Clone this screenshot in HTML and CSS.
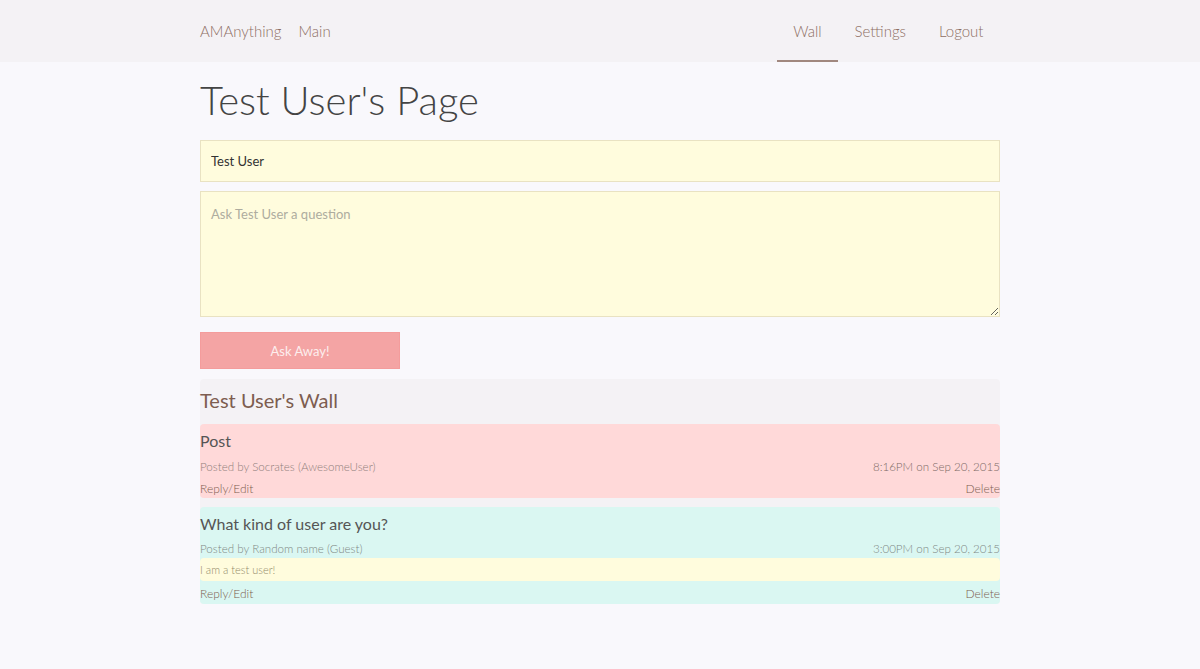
FILE: index.html
```html
<!DOCTYPE html>
<html>
<head>
<meta charset="utf-8">
<link rel="stylesheet" href="styles.css">
</head>
<body>
<nav class="navbar">
  <div class="container nav-inner">
    <div class="nav-left">
      <a class="brand">AMAnything</a>
      <a class="nav-link">Main</a>
    </div>
    <div class="nav-right">
      <a class="nav-link active">Wall</a>
      <a class="nav-link">Settings</a>
      <a class="nav-link">Logout</a>
    </div>
  </div>
</nav>
<main class="container">
  <h1 class="page-title">Test User's Page</h1>
  <input class="field name-field" type="text" value="Test User">
  <textarea class="field question-field" placeholder="Ask Test User a question"></textarea>
  <button class="ask-btn">Ask Away!</button>
  <section class="wall">
    <h2 class="wall-title">Test User's Wall</h2>
    <div class="post post-red">
      <div class="post-title">Post</div>
      <div class="post-meta"><span>Posted by Socrates (AwesomeUser)</span><span>8:16PM on Sep 20, 2015</span></div>
      <div class="post-actions"><a>Reply/Edit</a><a>Delete</a></div>
    </div>
    <div class="post post-teal">
      <div class="post-title">What kind of user are you?</div>
      <div class="post-meta"><span>Posted by Random name (Guest)</span><span>3:00PM on Sep 20, 2015</span></div>
      <div class="reply">I am a test user!</div>
      <div class="post-actions"><a>Reply/Edit</a><a>Delete</a></div>
    </div>
  </section>
</main>
</body>
</html>
```
FILE: styles.css
```css
* { box-sizing: border-box; }
body {
  margin: 0;
  background: #f9f8fc;
  font-family: Lato, "Open Sans", sans-serif;
  color: #444;
}
.container {
  width: 800px;
  margin: 0 auto;
}
.navbar {
  background: #f4f2f5;
  height: 62px;
}
.nav-inner {
  display: flex;
  justify-content: space-between;
  height: 62px;
}
.nav-left, .nav-right {
  display: flex;
  align-items: stretch;
}
.nav-left { gap: 17px; }
.brand, .nav-link {
  display: flex;
  align-items: center;
  color: #8d6e63;
  font-size: 15px;
  font-weight: 300;
  text-decoration: none;
}
.nav-right .nav-link {
  padding: 2px 16.5px 0;
  border-bottom: 2px solid transparent;
}
.nav-right .nav-link.active {
  border-bottom-color: #a1887f;
}
.page-title {
  font-weight: 300;
  font-size: 40px;
  color: #444;
  margin: 13px 0 15px;
  line-height: 50px;
}
.field {
  display: block;
  width: 100%;
  background: #fffcdd;
  border: 1px solid #e9e2c2;
  font-family: Lato, "Open Sans", sans-serif;
  font-size: 13px;
  color: #333;
  padding: 0 10px;
  outline: none;
}
.name-field { height: 42px; }
.question-field {
  height: 126px;
  margin-top: 9px;
  padding: 14px 10px;
  resize: vertical;
}
.question-field::placeholder { color: #aeac9f; }
.ask-btn {
  display: block;
  margin-top: 15px;
  width: 200px;
  height: 37px;
  background: #f4a4a4;
  border: 1px solid #f49c9c;
  color: #fdeeee;
  font-family: Lato, "Open Sans", sans-serif;
  font-size: 13px;
}
.wall {
  margin-top: 10px;
  background: #f4f2f5;
  border-radius: 4px;
  display: flex;
  flex-direction: column;
  gap: 9px;
}
.wall-title {
  margin: 0 0 -9px;
  font-weight: 400;
  font-size: 20px;
  color: #7d5d50;
  height: 45px;
  line-height: 43px;
}
.post {
  border-radius: 4px;
  display: flex;
  flex-direction: column;
}
.post-red { background: #ffd9d9; }
.post-teal { background: #daf7f2; }
.post-title {
  font-size: 16px;
  color: #555;
  line-height: 20px;
  padding-top: 7px;
}
.post-meta, .post-actions {
  display: flex;
  justify-content: space-between;
  font-weight: 300;
  line-height: 16px;
}
.post-meta {
  font-size: 11.6px;
  color: #8f807b;
  margin-top: 8px;
}
.post-red .post-meta span:last-child { color: #7d6a65; }
.post-teal .post-meta { color: #7f8884; margin-top: 7px; }
.post-actions {
  font-size: 12px;
  color: #7d5d50;
  padding: 6px 0 1px;
}
.reply {
  background: #fffcdd;
  border-radius: 4px;
  font-size: 11px;
  font-weight: 300;
  color: #948a6a;
  line-height: 23px;
  margin-top: 1px;
}
.post-teal .post-actions { padding: 5px 0 2px; }
```
